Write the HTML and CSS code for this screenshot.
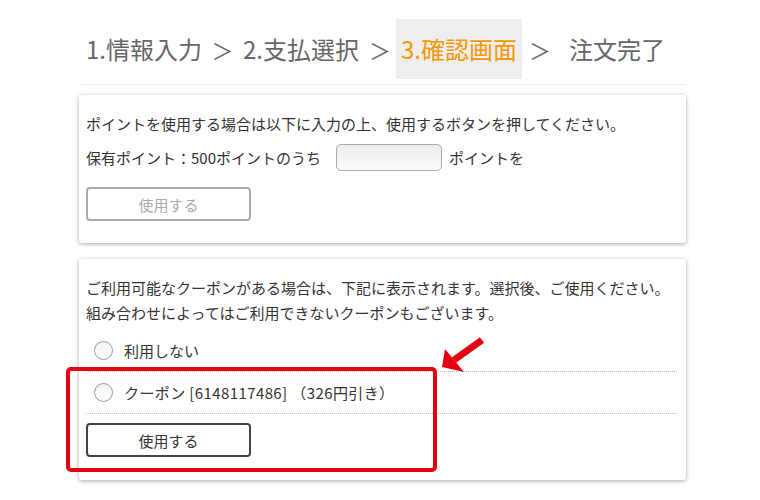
FILE: index.html
```html
<!DOCTYPE html>
<html lang="ja">
<head>
<meta charset="utf-8">
<title>確認画面</title>
<link rel="stylesheet" href="styles.css">
</head>
<body>
<div class="wrap">
  <div class="steps">
    <span class="step">1.情報入力</span>
    <span class="sep">＞</span>
    <span class="step">2.支払選択</span>
    <span class="sep sep2">＞</span>
    <span class="step current">3.確認画面</span>
    <span class="sep sep3">＞</span>
    <span class="step">注文完了</span>
  </div>

  <div class="card card-point">
    <p class="line">ポイントを使用する場合は以下に入力の上、使用するボタンを押してください。</p>
    <div class="point-row">
      <span>保有ポイント：500ポイントのうち</span>
      <span class="input"></span>
      <span>ポイントを</span>
    </div>
    <div class="btn btn-disabled">使用する</div>
  </div>

  <div class="card card-coupon">
    <p class="line">ご利用可能なクーポンがある場合は、下記に表示されます。選択後、ご使用ください。</p>
    <p class="line">組み合わせによってはご利用できないクーポンもございます。</p>
    <div class="option"><span class="radio"></span><span class="label">利用しない</span></div>
    <div class="option"><span class="radio"></span><span class="label coupon">クーポン [6148117486] （326円引き）</span></div>
    <div class="btn btn-active">使用する</div>
  </div>
</div>

<div class="highlight"></div>
<svg class="arrow" width="60" height="50" viewBox="0 0 60 50">
  <line x1="42" y1="10" x2="14" y2="30" stroke="#e60012" stroke-width="7"/>
  <polygon points="2,37 5,19 24,42" fill="#e60012"/>
</svg>
</body>
</html>
```

FILE: styles.css
```css
html, body {
  margin: 0;
  padding: 0;
  background: #fff;
}
body {
  font-family: "Noto Sans CJK JP", "Noto Sans", sans-serif;
  color: #333;
  font-size: 15px;
  position: relative;
  width: 760px;
  height: 500px;
  overflow: hidden;
}
.wrap {
  margin-left: 79px;
  width: 607px;
}
.steps {
  display: flex;
  align-items: flex-start;
  padding: 19px 0 0 2px;
  border-bottom: 1px solid #eeeeee;
  box-sizing: border-box;
  height: 85px;
}
.step {
  font-size: 24px;
  color: #666;
  padding: 0 5px;
  height: 60px;
  line-height: 60px;
  display: block;
}
.step.current {
  background: #eeeeee;
  color: #f39800;
}
.sep {
  font-size: 22px;
  color: #666;
  width: 31px;
  text-align: center;
  line-height: 60px;
  height: 60px;
  display: block;
}
.sep2 { width: 32px; }
.sep3 { width: 36px; padding-right: 6px; }

.card {
  background: #fff;
  border-radius: 3px;
  box-shadow: 0 1px 4px rgba(0,0,0,0.35);
  padding: 16px 9px 23px 7px;
  box-sizing: border-box;
}
.card-point {
  margin-top: 10px;
  height: 148px;
}
.card-coupon {
  margin-top: 16px;
  height: 221px;
}
.line {
  margin: 0;
  line-height: 25px;
  white-space: nowrap;
}
.point-row {
  display: flex;
  align-items: center;
  margin-top: 8px;
  height: 27px;
  white-space: nowrap;
}
.input {
  display: block;
  width: 106px;
  height: 27px;
  box-sizing: border-box;
  border: 1px solid #aaa;
  border-radius: 5px;
  background: linear-gradient(#ededed, #fafafa);
  margin: 0 7px 0 15px;
}
.btn {
  width: 165px;
  height: 34px;
  box-sizing: border-box;
  border-radius: 4px;
  display: flex;
  align-items: center;
  justify-content: center;
  font-size: 15px;
  background: #fff;
}
.btn-disabled {
  border: 2px solid #aaa;
  color: #aaa;
  margin-top: 16px;
}
.btn-active {
  border: 2px solid #444;
  color: #333;
  margin-top: 9px;
}
.option {
  display: flex;
  align-items: center;
  height: 42px;
  box-sizing: border-box;
  border-bottom: 1px dotted #bbb;
  padding-left: 8px;
}
.card-coupon .line + .option {
  margin-top: 5px;
}
.radio {
  width: 19px;
  height: 19px;
  box-sizing: border-box;
  border-radius: 50%;
  border: 1px solid #9a9a9a;
  background: linear-gradient(#f4f4f4, #fff);
  margin-right: 11px;
  flex: none;
}
.label {
  white-space: nowrap;
}
.coupon {
  letter-spacing: 0.4px;
}
.highlight {
  position: absolute;
  left: 66px;
  top: 367px;
  width: 371px;
  height: 105px;
  box-sizing: border-box;
  border: 4px solid #e60012;
  border-radius: 5px;
}
.arrow {
  position: absolute;
  left: 440px;
  top: 330px;
}
```
